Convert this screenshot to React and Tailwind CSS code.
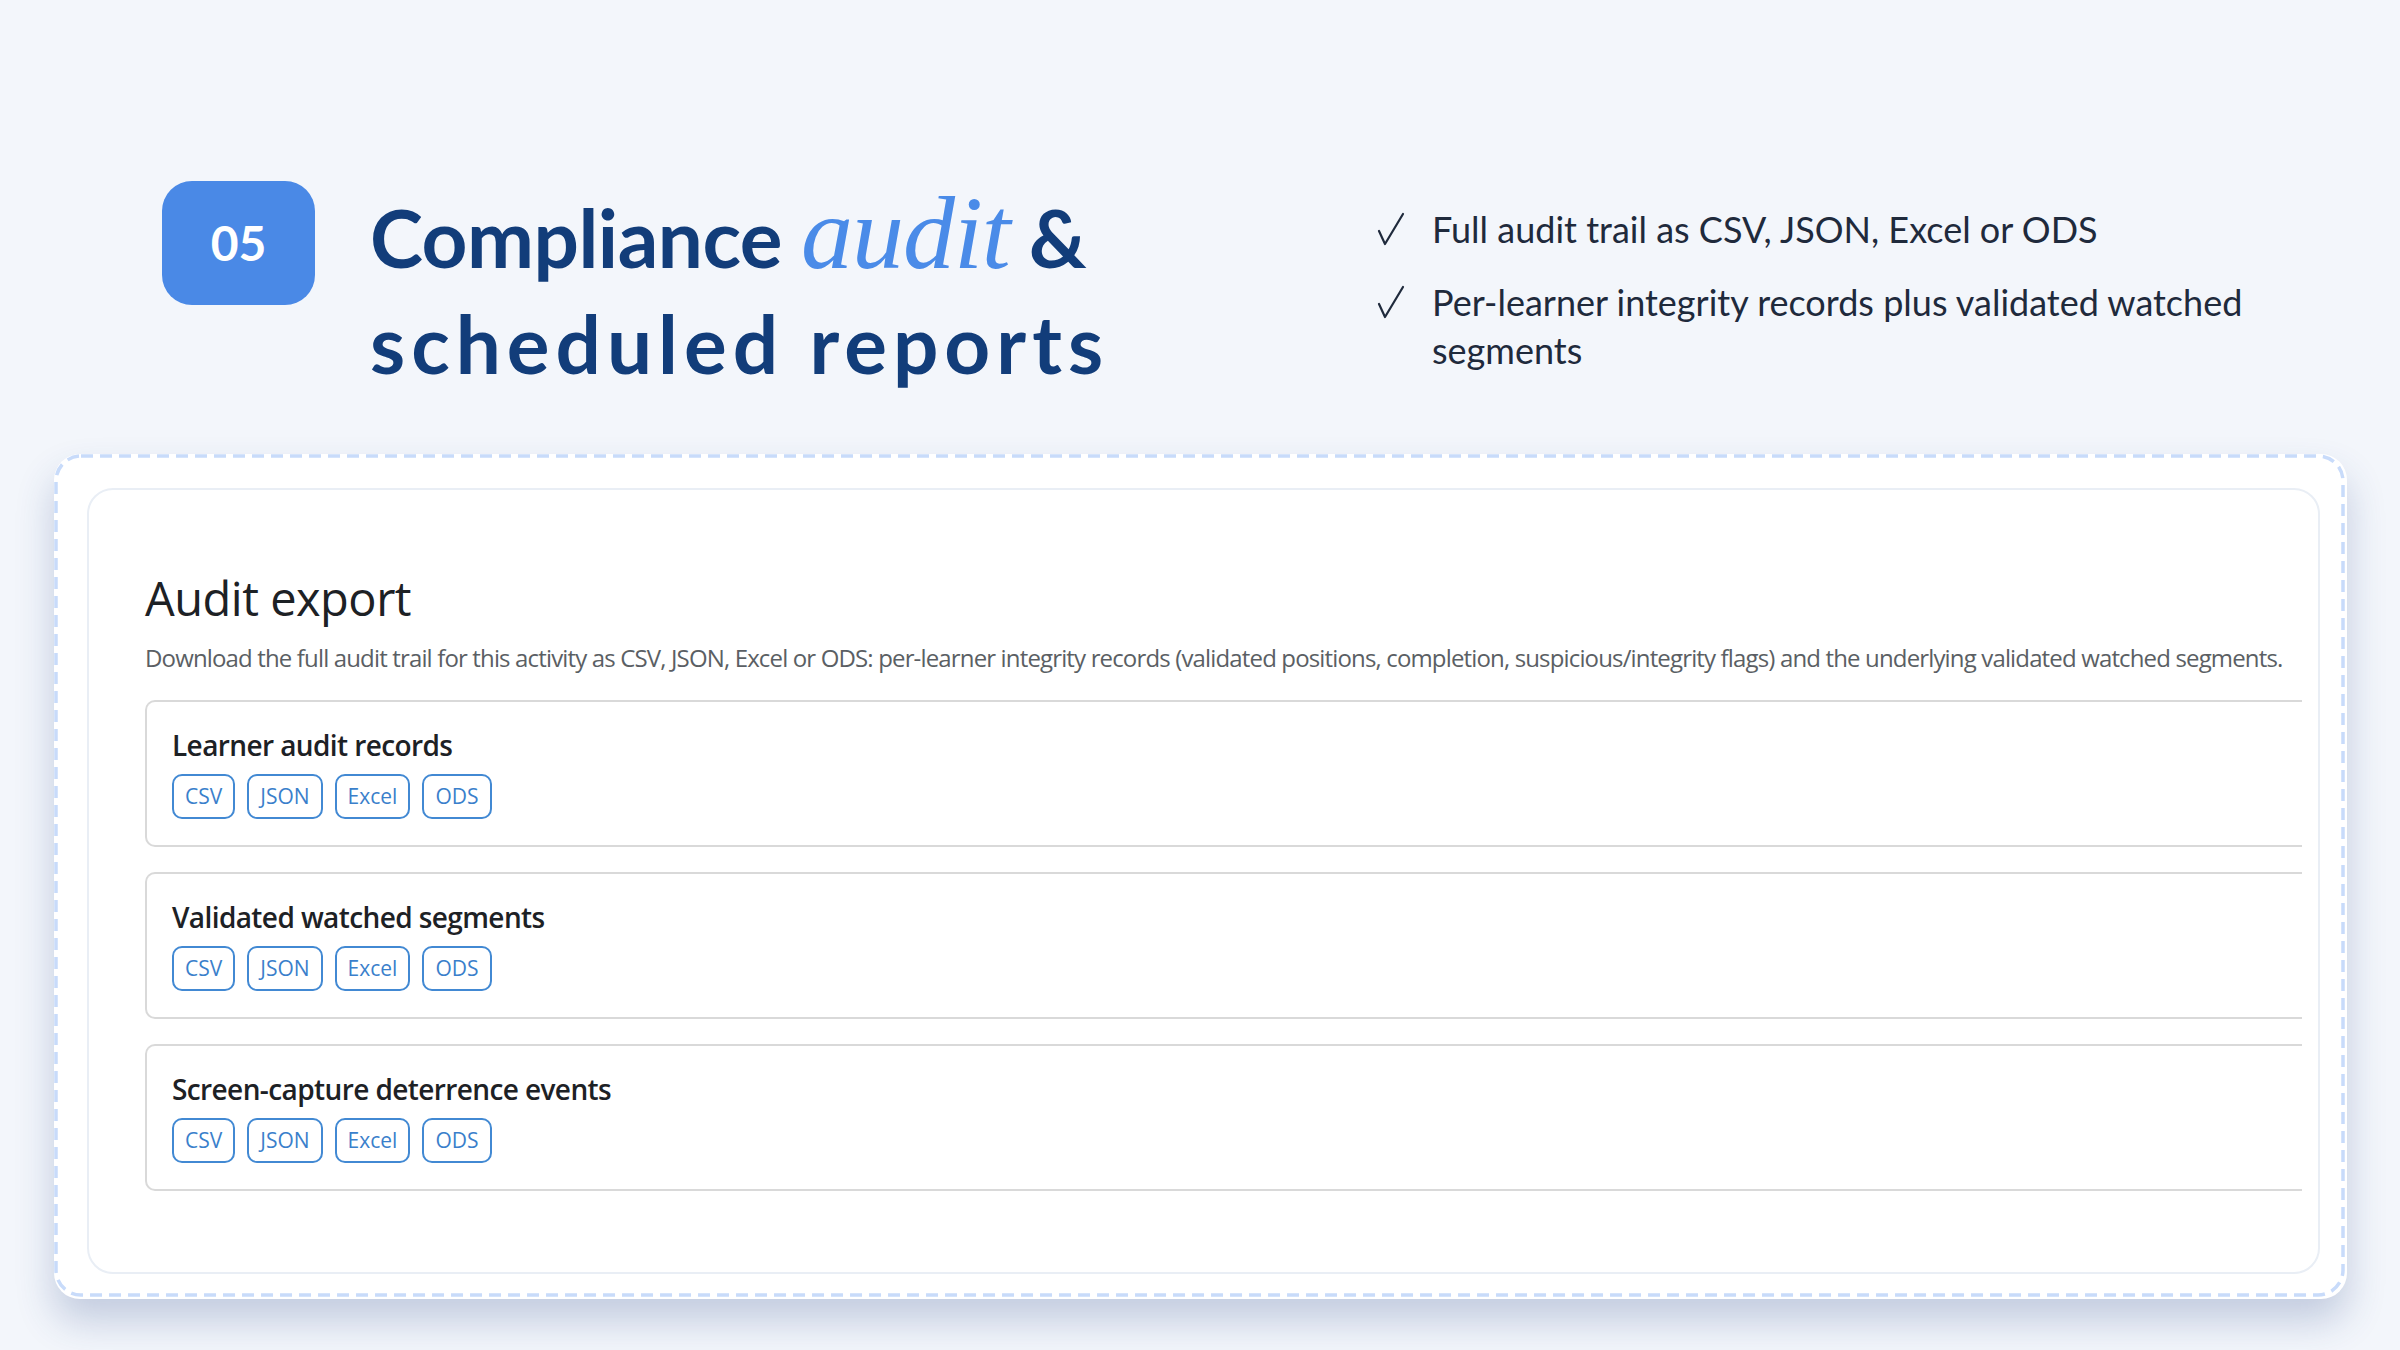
import React from 'react';

const formats = ['CSV', 'JSON', 'Excel', 'ODS'];

const sections = [
  'Learner audit records',
  'Validated watched segments',
  'Screen-capture deterrence events',
];

const points = [
  'Full audit trail as CSV, JSON, Excel or ODS',
  'Per-learner integrity records plus validated watched segments',
];

const Check = () => (
  <svg width="30" height="34" viewBox="0 0 30 34" className="mt-[7px]" fill="none">
    <path d="M2 19 L8 32 L26 2" stroke="#1f2a3c" strokeWidth="2.2" strokeLinecap="round" strokeLinejoin="round" />
  </svg>
);

const ExportRow = ({ title }) => (
  <div className="border-y-2 border-l-2 border-[#d9d9d9] rounded-l-[10px] pl-[25px] pt-[25px] pb-[26px]">
    <p className="text-[28px] leading-[36px] font-semibold text-[#1d2125] tracking-[-0.6px]">{title}</p>
    <div className="flex gap-[12px] mt-[11px]">
      {formats.map((f) => (
        <button
          key={f}
          className="h-[45px] px-[11px] border-2 border-[#4289d3] rounded-[10px] text-[21px] text-[#3a7fcb] bg-white"
        >
          {f}
        </button>
      ))}
    </div>
  </div>
);

export default function App() {
  return (
    <div className="min-h-[1350px] w-[2400px] bg-[#f3f6fb] pt-[181px] pl-[54px] pr-[53px] pb-[40px]">
      <div className="flex items-start">
        <div className="flex items-start pl-[108px]">
          <div className="w-[153px] h-[124px] rounded-[30px] bg-[#4a89e6] flex items-center justify-center">
            <span className="font-['Lato',sans-serif] font-bold text-[48px] text-white">05</span>
          </div>
          <h1 className="ml-[55px] mt-[6px] font-['Lato',sans-serif] font-bold text-[80px] leading-[100px] text-[#123d7a]">
            <span className="block tracking-[-0.5px]">
              Compliance{' '}
              <span className="font-['Liberation_Serif',serif] italic font-normal text-[104px] leading-[0px] text-[#4a8be8] tracking-[-1px]">audit</span>{' '}
              &amp;
            </span>
            <span className="block mt-[6px] tracking-[6px]">scheduled reports</span>
          </h1>
        </div>
        <ul className="ml-auto mr-[40px] w-[930px] mt-[24px] flex flex-col gap-[25px] font-['Lato',sans-serif] text-[36px] leading-[48px] text-[#1f2a3c]">
          {points.map((p) => (
            <li key={p} className="flex">
              <span className="w-[55px] shrink-0">
                <Check />
              </span>
              <span>{p}</span>
            </li>
          ))}
        </ul>
      </div>

      <div className="relative mt-[61px] h-[845px] bg-white border-[3px] border-transparent rounded-[26px] shadow-[0_22px_38px_rgba(40,70,140,0.24)] pt-[31px] pl-[30px] pr-[24px] pb-[22px]">
        <svg className="absolute inset-[-1.5px] pointer-events-none overflow-visible" width="100%" height="100%">
          <rect x="0" y="0" width="100%" height="100%" rx="25" ry="25" fill="none" stroke="#c8dbfa" strokeWidth="3.5" strokeDasharray="12 7" />
        </svg>
        <div className="h-full border-2 border-[#e9eef5] rounded-[26px] pt-[80px] pl-[56px] pr-[16px] font-['Open_Sans',sans-serif]">
          <h2 className="text-[47px] leading-[56px] text-[#1d2125] tracking-[-0.5px]">Audit export</h2>
          <p className="mt-[17px] text-[24px] leading-[30px] text-[#5b5f64] whitespace-nowrap tracking-[-0.85px]">
            Download the full audit trail for this activity as CSV, JSON, Excel or ODS: per-learner integrity records (validated positions, completion, suspicious/integrity flags) and the underlying validated watched segments.
          </p>
          <div className="mt-[27px] flex flex-col gap-[25px]">
            {sections.map((s) => (
              <ExportRow key={s} title={s} />
            ))}
          </div>
        </div>
      </div>
    </div>
  );
}
